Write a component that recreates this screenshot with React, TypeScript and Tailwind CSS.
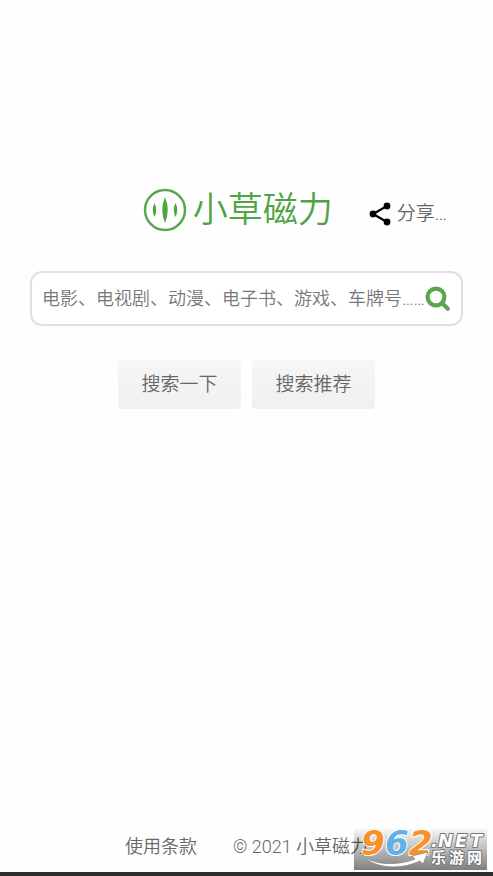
import { useState } from "react";

function LeafLogo() {
  return (
    <svg viewBox="0 0 44 44" className="h-11 w-11" aria-hidden="true">
      <circle cx="22" cy="22" r="20" fill="none" stroke="#56a64b" strokeWidth="2.4" />
      <path d="M22 9q5.5 13 0 26q-5.5-13 0-26z" fill="#4ba63c" />
      <path d="M11.5 15q3.4 7 0 14q-3.4-7 0-14zM32.5 15q3.4 7 0 14q-3.4-7 0-14z" fill="#4ba63c" />
    </svg>
  );
}

function ShareIcon() {
  return (
    <svg viewBox="0 0 22 24" className="h-6 w-[22px]" aria-hidden="true">
      <path d="M18 4L4 12l14 8" fill="none" stroke="#000" strokeWidth="2.2" />
      <circle cx="18" cy="4" r="3.4" />
      <circle cx="4" cy="12" r="3.4" />
      <circle cx="18" cy="20" r="3.4" />
    </svg>
  );
}

function SearchIcon() {
  return (
    <svg viewBox="0 0 26 26" className="h-[26px] w-[26px]" aria-hidden="true">
      <circle cx="11" cy="11" r="8.4" fill="none" stroke="#58a84b" strokeWidth="4.2" />
      <path d="M17.5 17.5l5.3 5.3" stroke="#58a84b" strokeWidth="4.2" strokeLinecap="round" />
    </svg>
  );
}

function Watermark() {
  return (
    <div className="absolute right-1.5 bottom-0.5" aria-hidden="true">
      <svg viewBox="0 0 133 49" className="h-[49px] w-[133px]">
        <defs>
          <linearGradient id="plate" x1="0" y1="0" x2="0" y2="1">
            <stop offset="0" stopColor="#000" stopOpacity="0.03" />
            <stop offset="1" stopColor="#000" stopOpacity="0.5" />
          </linearGradient>
        </defs>
        <rect y="8" width="133" height="41" fill="url(#plate)" />
        <g
          fontFamily='"DejaVu Sans", sans-serif'
          fontStyle="italic"
          fontWeight="bold"
          fontSize="34"
          stroke="#fff"
          strokeWidth="2"
          strokeLinejoin="round"
          paintOrder="stroke"
        >
          <text x="7" y="34" fill="#f7922b">9</text>
          <text x="31" y="34" fill="#62b0e6">6</text>
          <text x="55" y="34" fill="#f7922b">2</text>
        </g>
        <path
          d="M8 33C16 43 40 46 61 38l-3-3 16-4-5 12-3-3C45 50 17 47 8 33z"
          fill="#fff"
          stroke="#888"
          strokeWidth="0.8"
          strokeLinejoin="round"
        />
        <g fill="#fff" stroke="#777" strokeWidth="2" strokeLinejoin="round" paintOrder="stroke" fontWeight="bold">
          <text x="77 84 101 116" y="26" fontSize="18" fontStyle="italic" fontFamily='"DejaVu Sans", sans-serif'>
            .NET
          </text>
          <text x="77 95 113" y="42" fontSize="15" fontFamily='"Noto Sans CJK SC", sans-serif'>
            乐游网
          </text>
        </g>
      </svg>
    </div>
  );
}

export default function App() {
  const [keyword, setKeyword] = useState("");

  return (
    <div className="relative flex min-h-screen flex-col border-b-4 border-[#2b2d31] bg-[#fefefe] font-[Roboto,'Noto_Sans_CJK_SC',sans-serif] font-[350] text-[#666]">
      <main className="flex-1 px-[30px] pt-[185px]">
        <header className="flex items-center justify-end pr-4">
          <h1 className="flex items-center gap-1.5">
            <LeafLogo />
            <span className="pt-0.5 text-[35px] leading-12 text-[#4fa343]">小草磁力</span>
          </h1>
          <a href="#share" className="ml-9 flex items-center gap-1.5 pt-2 text-[19px] leading-7">
            <ShareIcon />
            <span>分享…</span>
          </a>
        </header>

        <form onSubmit={(e) => e.preventDefault()}>
          <div className="mt-9 flex h-[55px] items-center rounded-xl border-2 border-[#e0e0e0] bg-white pr-2.5 pl-2.5">
            <input
              type="text"
              aria-label="搜索"
              value={keyword}
              onChange={(e) => setKeyword(e.target.value)}
              placeholder="电影、电视剧、动漫、电子书、游戏、车牌号……"
              className="min-w-0 flex-1 text-[18px] leading-7 outline-none placeholder:text-[#777]"
            />
            <button type="submit" aria-label="搜索">
              <SearchIcon />
            </button>
          </div>

          <div className="mt-[34px] flex justify-center gap-[11px] text-[19px] leading-7">
            <button type="submit" className="h-[49px] w-[123px] rounded bg-linear-to-b from-[#f6f6f6] to-[#f0f0f0]">
              搜索一下
            </button>
            <button type="button" className="h-[49px] w-[123px] rounded bg-linear-to-b from-[#f6f6f6] to-[#f0f0f0]">
              搜索推荐
            </button>
          </div>
        </form>
      </main>

      <footer className="flex justify-center gap-9 pb-[11px] text-[18px] leading-7">
        <a href="#terms">使用条款</a>
        <span>© 2021 小草磁力</span>
      </footer>
      <Watermark />
    </div>
  );
}
